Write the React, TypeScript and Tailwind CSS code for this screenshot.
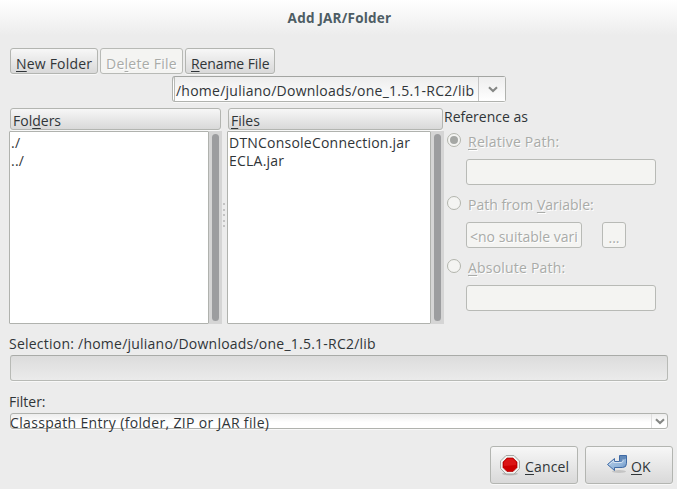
import type { ReactNode } from "react";
import { clsx } from "clsx";

const raised =
  "rounded-[3px] border border-[#b3b5b1] bg-linear-to-b from-[#f7f7f7] to-[#d9d9d9] shadow-[0_1px_0_#f8f8f8]";
const disabled =
  "rounded-[3px] border border-[#b8bab6] bg-[#f4f4f2] text-[#a9aba8] [text-shadow:1px_1px_0_#fff]";

function Label({ className, children }: { className?: string; children: ReactNode }) {
  return (
    <div className={clsx("h-[18px] leading-[18px] whitespace-pre", className)}>{children}</div>
  );
}

function Key({ children }: { children: ReactNode }) {
  return <span className="underline decoration-1 underline-offset-2">{children}</span>;
}

function Chevron() {
  return (
    <svg width="10" height="7" viewBox="0 0 10 7" fill="none">
      <path d="M1 1.2 L5 5 L9 1.2" stroke="#858785" strokeWidth="2.1" />
    </svg>
  );
}

function ListPane({ title, items, className }: { title: ReactNode; items: string[]; className: string }) {
  return (
    <section className={clsx("flex flex-col", className)}>
      <div className={clsx("ml-px mr-px h-[22px] pl-[2px] pt-[3px]", raised)}>
        <Label>{title}</Label>
      </div>
      <div className="mt-px flex h-[193px]">
        <ul className="flex-1 rounded-[1px] border border-[#b0b2ae] bg-white pl-px pt-[2px] tracking-[0.22px]">
          {items.map((item) => (
            <li key={item}>
              <Label>{item}</Label>
            </li>
          ))}
        </ul>
        <div className="h-full w-[13px] bg-[#d5d5d5] pl-[3px] pt-[3px]">
          <div className="h-[187px] w-[7px] rounded-full bg-[#9c9d9f]" />
        </div>
      </div>
    </section>
  );
}

function Radio({ checked, children }: { checked?: boolean; children: ReactNode }) {
  return (
    <div className="flex h-[18px] text-[#a9aba8] [text-shadow:1px_1px_0_#fff]">
      <span className="ml-[3px] mr-[7px] flex size-[14px] items-center justify-center rounded-full border border-[#b3b5ad] bg-[#f4f4f2]">
        {checked && <span className="size-2 rounded-full bg-[#a5a7a4]" />}
      </span>
      {children}
    </div>
  );
}

function StopIcon() {
  return (
    <svg width="22" height="22" viewBox="0 0 22 22">
      <ellipse cx="11" cy="19.8" rx="8" ry="1.6" fill="#bdbdbd" />
      <path d="M7 1.5h8l5.5 5.5v7.5L15 20H7l-5.500-5.500V7z" fill="#f1f2f0" stroke="#a7aaa5" />
      <path d="M8 4h6l4 4v5.500l-4 4H8l-4-4V8z" fill="#cc0000" stroke="#b00000" strokeWidth=".7" />
      <path d="M8.300 4.800h5.400L17 8v3L5 12V8z" fill="#e32020" opacity=".65" />
    </svg>
  );
}

function ReturnIcon() {
  return (
    <svg width="22" height="20" viewBox="0 0 22 20">
      <defs>
        <linearGradient id="arrow" x1="0" y1="0" x2="1" y2="1">
          <stop offset="0" stopColor="#b9d0e9" />
          <stop offset=".65" stopColor="#91b4da" />
          <stop offset="1" stopColor="#5e88bd" />
        </linearGradient>
      </defs>
      <ellipse cx="13" cy="17.500" rx="7" ry="1.500" fill="#c4c4c4" />
      <path
        d="M1.500 10.500 L8.500 4.500 V7.500 H13.500 V1.500 H20.500 V9.500 Q20.500 13.500 16.500 13.500 H8.500 V16.500 Z"
        fill="url(#arrow)"
        stroke="#3f6aa5"
        strokeLinejoin="round"
      />
      <path d="M14 2H20V4.500L17 6V8H14Z" fill="#6189b9" />
      <path d="M3.200 10.500L7.700 6.700V8.500H15Q17 8.500 17 6.500V5.500" fill="none" stroke="#dce8f5" strokeWidth=".9" />
    </svg>
  );
}

export default function App() {
  return (
    <main className="flex h-[489px] w-[677px] flex-col overflow-hidden bg-[#ececec] font-['Open_Sans',sans-serif] text-[14px] text-[#303538]">
      <header className="h-[36px] bg-linear-to-b from-white to-[#ececec] pl-[2px] pt-[9px] text-center text-[13.5px] font-bold tracking-[0.22px] text-[#4e5d64]">
        <Label>Add JAR/Folder</Label>
      </header>

      <div className="ml-[10px] mt-[12px] flex h-[26px] gap-[2px]">
        <button className={clsx("w-[88px] pl-[5px] pt-[5px] text-left tracking-[0.2px]", raised)}>
          <Label><Key>N</Key>ew Folder</Label>
        </button>
        <button disabled className={clsx("w-[83px] pl-[5px] pt-[5px] text-left tracking-[0.25px]", disabled)}>
          <Label>De<Key>l</Key>ete File</Label>
        </button>
        <button className={clsx("w-[90px] pl-[5px] pt-[5px] text-left tracking-[-0.1px]", raised)}>
          <Label><Key>R</Key>ename File</Label>
        </button>
      </div>

      <div className="ml-[172px] mt-[2px] flex h-[26px] w-[334px] rounded-[3px] border border-[#b0b2ae] border-t-[#a3a5a2] bg-linear-to-b from-[#dcdcdc] via-white via-20% to-white shadow-[0_1px_0_#f8f8f8]">
        <div className="ml-px w-[305px] border-x border-[#b8bab6] border-r-[#c4c4c4] bg-linear-to-b from-[#ededed] to-white pl-[1px] pt-[5px] tracking-[0.24px]">
          <Label>/home/juliano/Downloads/one_1.5.1-RC2/lib</Label>
        </div>
        <div className="flex flex-1 items-center justify-center bg-linear-to-b from-[#eeeeee] to-white pl-[2px]"><Chevron /></div>
      </div>

      <div className="ml-[9px] mt-[6px] flex h-[216px]">
        <ListPane className="w-[213px]" title={<>Fol<Key>d</Key>ers</>} items={["./", "../"]} />
        <div className="flex w-[5px] flex-col gap-[3.5px] pl-px pt-[95px]">
          {[0, 1, 2, 3, 4].map((dot) => (
            <i key={dot} className="size-[2px] bg-[#c3c3c3]" />
          ))}
        </div>
        <ListPane className="w-[217px]" title={<><Key>F</Key>iles</>} items={["DTNConsoleConnection.jar", "ECLA.jar"]} />
        <section className="w-[220px]">
          <Label>Reference as</Label>
          <div className="mt-[7px]">
            <Radio checked><Label className="tracking-[0.22px]"><Key>R</Key>elative Path:</Label></Radio>
            <div className={clsx("ml-[22px] mt-[8px] h-[26px] w-[190px]", disabled)} />
          </div>
          <div className="mt-[11px]">
            <Radio><Label>Path from <Key>V</Key>ariable:</Label></Radio>
            <div className="ml-[22px] mt-[8px] flex gap-[20px]">
              <div className={clsx("h-[26px] w-[116px] pl-[3px] pt-[5px]", disabled)}>
                <Label>&lt;no suitable vari</Label>
              </div>
              <button disabled className={clsx("h-[26px] w-[24px] pt-[5px]", disabled)}>
                <Label>...</Label>
              </button>
            </div>
          </div>
          <div className="mt-[11px]">
            <Radio><Label className="tracking-[0.2px]"><Key>A</Key>bsolute Path:</Label></Radio>
            <div className={clsx("ml-[22px] mt-[8px] h-[26px] w-[190px]", disabled)} />
          </div>
        </section>
      </div>

      <Label className="ml-[9px] mt-[11px] tracking-[0.23px]">Selection: /home/juliano/Downloads/one_1.5.1-RC2/lib</Label>
      <div className="ml-[10px] mt-[2px] h-[26px] w-[658px] shrink-0 rounded-[3px] border border-[#b8bab6] border-t-[#a9aba8] bg-linear-to-b from-[#dcdcdc] to-[#ebebeb] shadow-[0_1px_0_#f8f8f8]" />
      <Label className="ml-[9px] mt-[12px]">Filter:</Label>
      <div className="ml-[10px] mt-[2px] flex h-[16px] w-[658px] rounded-[3px] border border-[#b0b2ae] bg-linear-to-b from-[#ededed] via-white via-60% to-white shadow-[0_1px_0_#f8f8f8]">
        <Label className="-ml-px flex-1 tracking-[0.34px]">Classpath Entry (folder, ZIP or JAR file)</Label>
        <div className="flex w-[16px] items-center justify-center border-l border-[#dedede]"><Chevron /></div>
      </div>

      <div className="ml-[490px] mt-[17px] flex h-[38px] gap-[7px]">
        <button className={clsx("flex w-[88px] pl-[8px]", raised)}>
          <span className="mr-[4px] mt-[7px]"><StopIcon /></span>
          <Label className="mt-[11px] tracking-[0.15px]"><Key>C</Key>ancel</Label>
        </button>
        <button className={clsx("flex w-[88px] pl-[20px]", raised)}>
          <span className="mr-[3px] mt-[7px]"><ReturnIcon /></span>
          <Label className="mt-[11px]"><Key>O</Key>K</Label>
        </button>
      </div>
    </main>
  );
}
